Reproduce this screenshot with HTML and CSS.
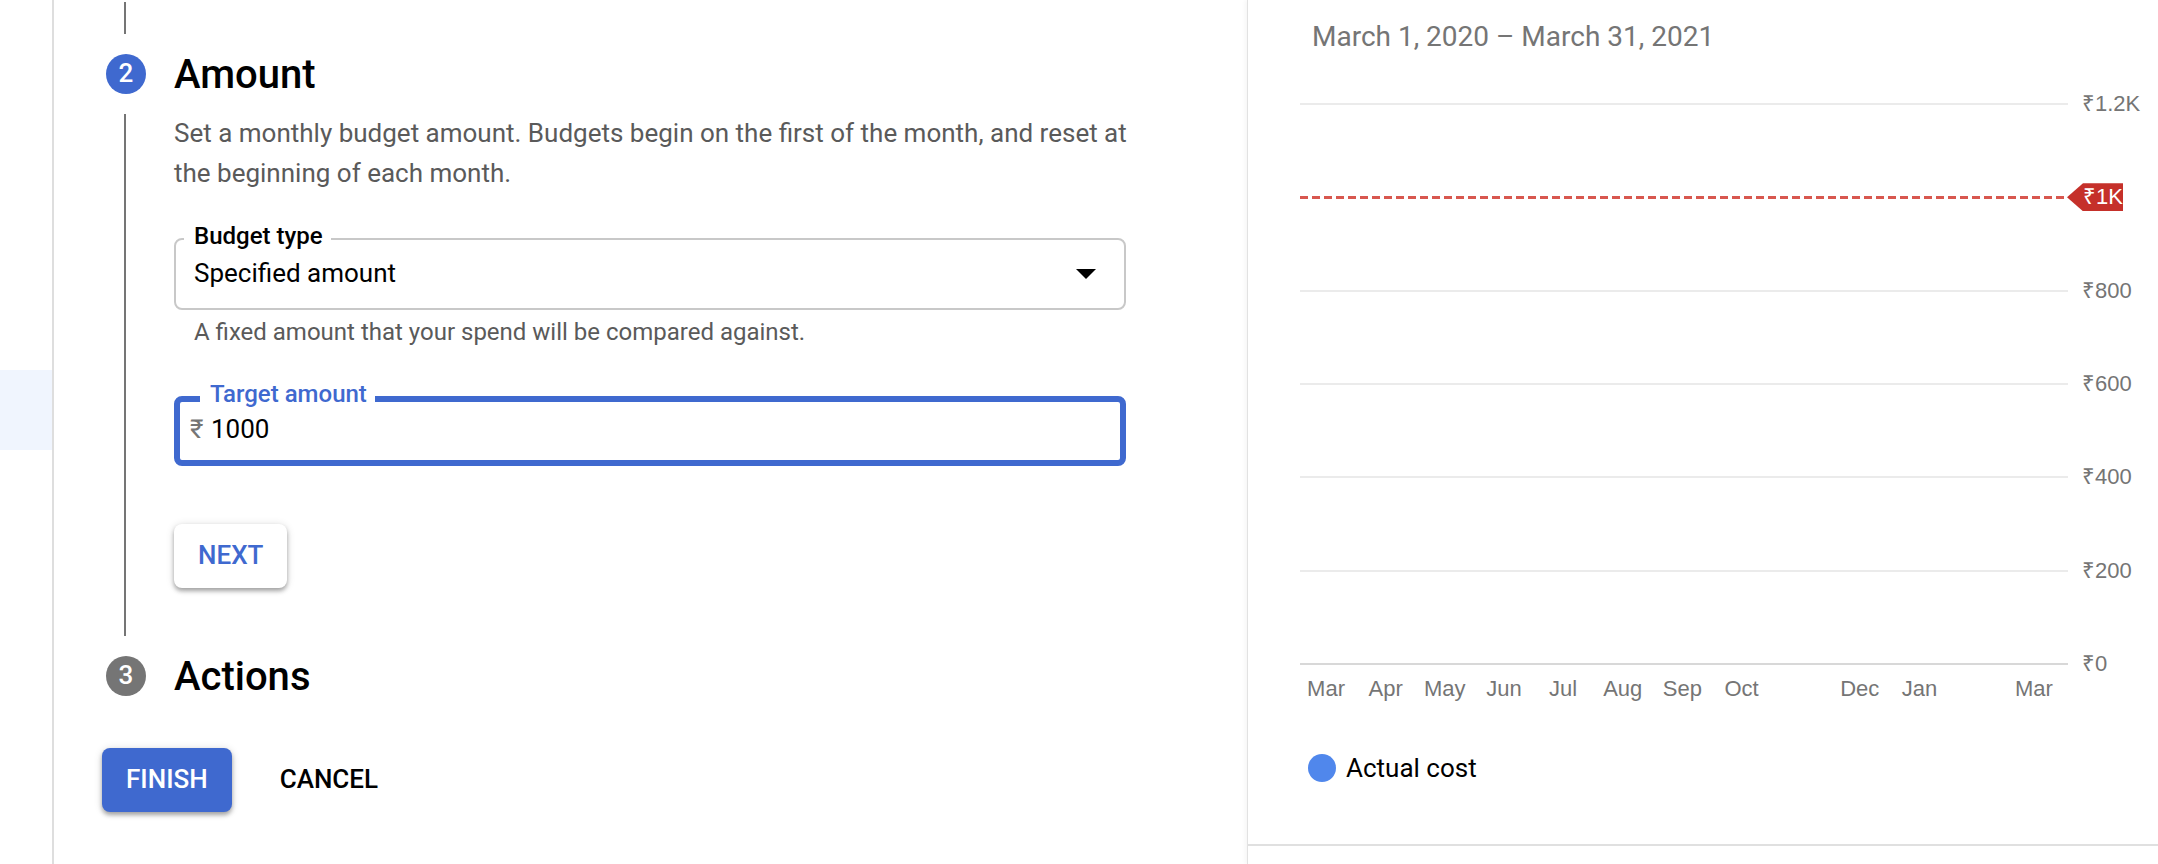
FILE: index.html
```html
<!DOCTYPE html>
<html lang="en">
<head>
<meta charset="utf-8">
<title>Create budget</title>
<link rel="stylesheet" href="styles.css">
</head>
<body>
<div class="page">
  <nav class="sidebar" aria-label="Billing">
    <a class="sidebar-item" href="#budgets" aria-label="Budgets"></a>
  </nav>

  <main class="main">
    <form class="form">
      <div class="steps">
        <div class="connector connector-top"></div>
        <section class="step">
          <div class="marker">
            <span class="badge badge-active">2</span>
            <div class="connector"></div>
          </div>
          <div class="content content-open">
            <h2 class="title">Amount</h2>
            <p class="description">Set a monthly budget amount. Budgets begin on the first of the month, and reset at the beginning of each month.</p>
            <div class="field">
              <label class="field-label" for="budget-type">Budget type</label>
              <select class="select" id="budget-type">
                <option>Specified amount</option>
              </select>
              <svg class="arrow" viewBox="0 0 20 10" aria-hidden="true"><path d="M0 0h20L10 10z"/></svg>
            </div>
            <p class="hint">A fixed amount that your spend will be compared against.</p>
            <div class="field field-focused">
              <label class="field-label field-label-focused" for="target">Target amount</label>
              <span class="prefix">₹</span>
              <input class="input" id="target" type="text" value="1000">
            </div>
            <button class="button button-raised" type="button">NEXT</button>
          </div>
        </section>
        <section class="step">
          <div class="marker"><span class="badge">3</span></div>
          <div class="content"><h2 class="title">Actions</h2></div>
        </section>
      </div>
      <div class="actions">
        <button class="button button-primary" type="button">FINISH</button>
        <button class="button" type="button">CANCEL</button>
      </div>
    </form>
  </main>

  <aside class="panel">
    <section class="trend">
      <h3 class="range">March 1, 2020 – March 31, 2021</h3>
      <div class="chart">
        <div class="tick"><i class="line"></i><span class="value">₹1.2K</span></div>
        <div class="tick"><i class="line line-target"></i><span class="value"><b class="tag">₹1K</b></span></div>
        <div class="tick"><i class="line"></i><span class="value">₹800</span></div>
        <div class="tick"><i class="line"></i><span class="value">₹600</span></div>
        <div class="tick"><i class="line"></i><span class="value">₹400</span></div>
        <div class="tick"><i class="line"></i><span class="value">₹200</span></div>
        <div class="tick"><i class="line line-base"></i><span class="value">₹0</span></div>
      </div>
      <div class="months">
        <span>Mar</span><span>Apr</span><span>May</span><span>Jun</span><span>Jul</span><span>Aug</span><span>Sep</span><span>Oct</span><span></span><span>Dec</span><span>Jan</span><span></span><span>Mar</span>
      </div>
      <div class="legend"><i class="dot"></i>Actual cost</div>
    </section>
  </aside>
</div>
</body>
</html>
```
FILE: styles.css
```css
* {
  box-sizing: border-box;
}

body {
  margin: 0;
  background: #fff;
  color: #000;
  font-family: Roboto, "Liberation Sans", sans-serif;
  font-size: 26px;
}

.page {
  display: grid;
  grid-template-columns: 54px minmax(0, 1193fr) minmax(0, 911fr);
  min-height: 100vh;
}

.sidebar {
  padding-top: 370px;
  border-right: 2px solid #dedede;
}

.sidebar-item {
  display: block;
  height: 80px;
  background: #f0f5fe;
}

.main {
  padding: 2px 121px 40px 48px;
}

.steps {
  padding-left: 4px;
}

.step {
  display: grid;
  grid-template-columns: 40px minmax(0, 1fr);
  column-gap: 28px;
}

.marker {
  display: flex;
  flex-direction: column;
  padding-top: 20px;
}

.badge {
  height: 40px;
  margin-bottom: 20px;
  border-radius: 50%;
  background: #757575;
  color: #fff;
  font-size: 26px;
  font-weight: 500;
  line-height: 38px;
  text-align: center;
}

.badge-active {
  background: #3f69cf;
}

.connector {
  flex: 1;
  width: 2px;
  margin-left: 18px;
  background: #757575;
}

.connector-top {
  height: 32px;
}

.content {
  padding-top: 20px;
}

.content-open {
  padding-bottom: 48px;
}

.title {
  margin: 0;
  font-size: 40px;
  font-weight: 500;
  line-height: 42px;
}

.description {
  margin: 17px -8px 45px 0;
  color: #5a5a5a;
  line-height: 40px;
}

.field {
  position: relative;
  display: flex;
  height: 72px;
  border: 2px solid #c8c8c8;
  border-radius: 8px;
}

.field-label {
  position: absolute;
  top: -18px;
  left: 8px;
  padding: 0 8px 0 10px;
  background: #fff;
  font-size: 24px;
  font-weight: 500;
  line-height: 28px;
}

.field-label-focused {
  top: -22px;
  left: 20px;
  color: #3f69cf;
}

.select,
.input {
  flex: 1;
  min-width: 0;
  border: 0;
  outline: 0;
  background: transparent;
  color: #000;
  font: inherit;
  appearance: none;
}

.select {
  padding: 0 18px 2px;
}

.arrow {
  position: absolute;
  top: 29px;
  right: 28px;
  width: 20px;
  height: 10px;
  pointer-events: none;
}

.hint {
  margin: 6px 0 48px;
  padding-left: 20px;
  color: #5a5a5a;
  font-size: 24px;
  line-height: 32px;
}

.field-focused {
  align-items: center;
  height: 70px;
  padding: 0 10px 4px;
  border: 6px solid #3f69cf;
}

.prefix {
  width: 21px;
  color: #757575;
}

.input {
  padding: 0;
}

.button {
  height: 64px;
  padding: 0 24px 2px;
  border: 0;
  border-radius: 8px;
  background: none;
  color: #000;
  font: inherit;
  font-weight: 500;
}

.button-raised {
  margin-top: 58px;
  background: #fff;
  color: #3f69cf;
}

.button-raised,
.button-primary {
  display: block;
  box-shadow: 0 3px 4px rgba(0, 0, 0, 0.3), 0 1px 8px rgba(0, 0, 0, 0.14);
}

.button-primary {
  background: #3f69cf;
  color: #fff;
}

.actions {
  display: flex;
  gap: 24px;
  margin-top: 50px;
}

/* The last step has no connector below its badge. */
.step:last-child .badge {
  margin-bottom: 0;
}

.panel {
  border-left: 1px solid #e2e2e2;
  box-shadow: -2px 0 4px rgba(0, 0, 0, 0.04);
}

.trend {
  padding: 21px 0 60px 48px;
  border-bottom: 2px solid #e0e0e0;
}

.range {
  margin: 0 0 37px;
  padding-left: 16px;
  color: #757575;
  font-size: 28px;
  font-weight: 400;
  line-height: 32px;
}

.chart {
  display: flex;
  flex-direction: column;
  justify-content: space-between;
  height: 588px;
  padding-left: 4px;
}

.chart,
.months {
  color: #757575;
  font-family: "Liberation Sans", Arial, sans-serif;
  font-size: 22px;
  line-height: 28px;
}

.tick {
  display: flex;
  align-items: center;
  height: 28px;
}

.line {
  flex: 1;
  height: 2px;
  background: #ebebeb;
}

.line-target {
  height: 3px;
  background: repeating-linear-gradient(90deg, #d8574f 0 8px, #fff 8px 12px);
}

.line-base {
  background: #d8d8d8;
}

.value {
  width: 90px;
  padding-left: 14px;
}

.tag {
  display: block;
  width: 56px;
  margin-left: -15px;
  padding-left: 16px;
  background: #c5302a;
  clip-path: polygon(0 50%, 16px 0, 100% 0, 100% 100%, 16px 100%);
  color: #fff;
  font-weight: 400;
}

.months {
  display: grid;
  grid-template-columns: 62fr repeat(4, 61fr) 62fr repeat(4, 61fr) 62fr 59fr 56fr;
  margin: -3px 97px 0 0;
  text-align: center;
}

.legend {
  display: flex;
  align-items: center;
  gap: 10px;
  margin-top: 49px;
  padding-left: 12px;
  line-height: 32px;
}

.dot {
  width: 28px;
  height: 28px;
  border-radius: 50%;
  background: #5087ec;
}
```
